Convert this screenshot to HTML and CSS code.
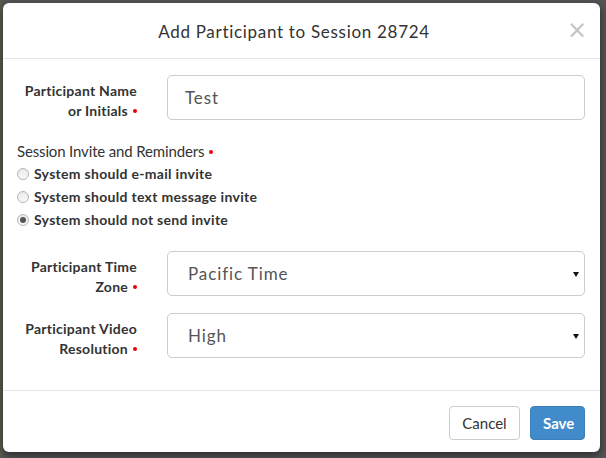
FILE: index.html
```html
<!DOCTYPE html>
<html>
<head>
<meta charset="utf-8">
<link rel="stylesheet" href="styles.css">
</head>
<body>
<div class="modal">
  <div class="modal-header">
    <h4 class="modal-title">Add Participant to Session 28724</h4>
    <button class="close" type="button">&times;</button>
  </div>
  <div class="modal-body">
    <div class="form-row first">
      <label class="control-label">Participant Name or Initials<span class="req"></span></label>
      <input class="form-control" type="text" value="Test">
    </div>
    <div class="invite">
      <div class="invite-label">Session Invite and Reminders<span class="req"></span></div>
      <label class="radio"><input type="radio" name="inv"><span>System should e-mail invite</span></label>
      <label class="radio"><input type="radio" name="inv"><span>System should text message invite</span></label>
      <label class="radio"><input type="radio" name="inv" checked><span>System should not send invite</span></label>
    </div>
    <div class="form-row">
      <label class="control-label">Participant Time Zone<span class="req"></span></label>
      <div class="select-wrap">
        <select class="form-control"><option>Pacific Time</option></select>
      </div>
    </div>
    <div class="form-row">
      <label class="control-label">Participant Video Resolution<span class="req"></span></label>
      <div class="select-wrap">
        <select class="form-control"><option>High</option></select>
      </div>
    </div>
  </div>
  <div class="modal-footer">
    <button class="btn btn-default" type="button">Cancel</button>
    <button class="btn btn-primary" type="button">Save</button>
  </div>
</div>
</body>
</html>
```
FILE: styles.css
```css
html, body {
  margin: 0;
  padding: 0;
  height: 100%;
}
body {
  width: 606px;
  height: 458px;
  overflow: hidden;
  background: linear-gradient(to right, #5b5a4c 0, #5b5a4c 3px, #545454 3px, #545454 100%);
  font-family: Lato, "Open Sans", sans-serif;
  color: #333;
  padding-top: 3px;
  box-sizing: border-box;
}
.modal {
  position: relative;
  margin-left: 3px;
  width: 597px;
  height: 449px;
  background: #fff;
  border-radius: 6px;
  box-shadow: 0 3px 9px rgba(0,0,0,0.5);
  display: flex;
  flex-direction: column;
}
.modal-header {
  position: relative;
  height: 56px;
  box-sizing: border-box;
  padding: 17px 30px 15px 15px;
  border-bottom: 1px solid #e5e5e5;
}
.modal-title {
  margin: 0;
  text-align: center;
  font-size: 17px;
  line-height: 24px;
  font-weight: 400;
  letter-spacing: 0.7px;
  color: #333;
}
.close {
  position: absolute;
  right: 13px;
  top: 12px;
  border: 0;
  background: none;
  padding: 0;
  font-family: "DejaVu Sans", sans-serif;
  font-size: 24px;
  line-height: 30px;
  color: #c4c4c4;
  cursor: pointer;
}
.modal-body {
  flex: 1;
  padding: 16px 15px 0 15px;
  box-sizing: border-box;
}
.form-row {
  display: grid;
  grid-template-columns: 119px 418px;
  column-gap: 30px;
  margin-bottom: 16px;
}
.form-row.first {
  margin-bottom: 20px;
}
.control-label {
  text-align: right;
  font-size: 14px;
  font-weight: 700;
  line-height: 20px;
  letter-spacing: 0.25px;
  padding-top: 6px;
  color: #333;
}
.req::after {
  content: "";
  display: inline-block;
  width: 4px;
  height: 4px;
  border-radius: 50%;
  background: #e00;
  margin-left: 5px;
  vertical-align: middle;
  position: relative;
  top: -1px;
}
.form-control {
  display: block;
  width: 100%;
  height: 45px;
  box-sizing: border-box;
  border: 1px solid #ccc;
  border-radius: 5px;
  padding: 0 17px;
  font-family: Lato, "Open Sans", sans-serif;
  font-size: 17px;
  letter-spacing: 0.9px;
  color: #555;
  background: #fff;
  outline: none;
  margin: 0;
}
select.form-control {
  -webkit-appearance: none;
  appearance: none;
  padding-left: 20px;
}
.select-wrap {
  position: relative;
}
.select-wrap::after {
  content: "";
  position: absolute;
  right: 6px;
  top: 21px;
  border-left: 3px solid transparent;
  border-right: 3px solid transparent;
  border-top: 5px solid #111;
  pointer-events: none;
}
.invite {
  margin-left: -1px;
  margin-bottom: 20px;
}
.invite-label {
  font-size: 15px;
  line-height: 20px;
  letter-spacing: -0.15px;
  color: #333;
  margin-bottom: 1px;
}
.radio {
  display: flex;
  align-items: center;
  height: 23px;
  font-size: 14px;
  font-weight: 700;
  letter-spacing: 0.3px;
  color: #333;
}
.radio input {
  -webkit-appearance: none;
  appearance: none;
  width: 12px;
  height: 12px;
  margin: 0 5px 0 0;
  border-radius: 50%;
  border: 1px solid #b5b5b5;
  background: linear-gradient(#e9e9e9, #f8f8f8);
  box-sizing: border-box;
  position: relative;
}
.radio input:checked::after {
  content: "";
  position: absolute;
  left: 2px;
  top: 2px;
  width: 6px;
  height: 6px;
  border-radius: 50%;
  background: #555;
}
.modal-footer {
  height: 62px;
  box-sizing: border-box;
  border-top: 1px solid #e5e5e5;
  padding: 15px 15px 0;
  display: flex;
  justify-content: flex-end;
  gap: 10px;
}
.btn {
  height: 34px;
  box-sizing: border-box;
  border-radius: 4px;
  font-family: Lato, "Open Sans", sans-serif;
  font-size: 15px;
  padding: 0 12px;
  cursor: pointer;
}
.btn-default {
  width: 71px;
  background: #fff;
  border: 1px solid #ccc;
  color: #333;
}
.btn-primary {
  width: 55px;
  background: #428bca;
  border: 1px solid #3b7fbb;
  color: #fff;
  font-weight: 700;
}
```
